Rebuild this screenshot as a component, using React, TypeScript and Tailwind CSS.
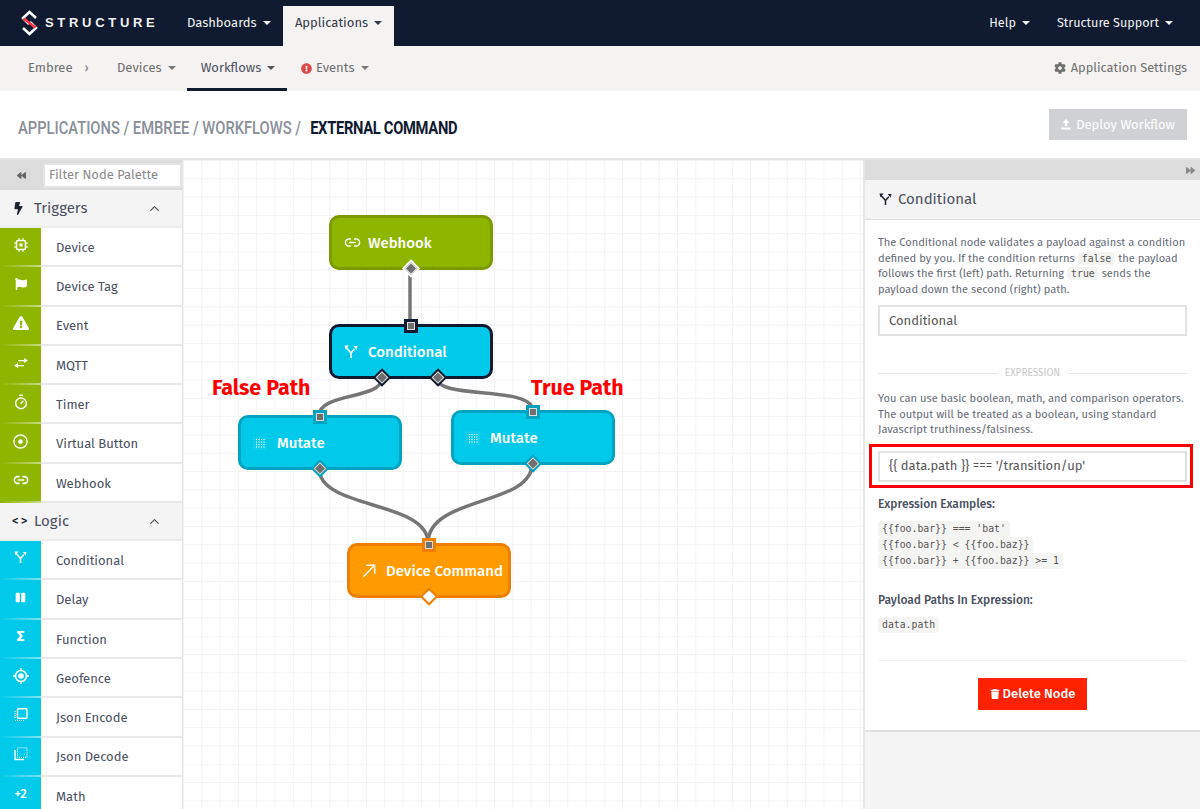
import { ReactNode } from "react";
import { ChevronUp, Link2, Timer } from "lucide-react";
import {
  FaBolt,
  FaFlag,
  FaExclamationTriangle,
  FaRegDotCircle,
  FaPause,
  FaCog,
  FaExclamationCircle,
  FaTrash,
  FaBackward,
  FaForward,
} from "react-icons/fa";

const ChipIcon = () => (
  <svg width="14" height="14" viewBox="0 0 14 14" fill="none" stroke="white">
    <rect x="2.5" y="2.5" width="9" height="9" rx="1.5" strokeWidth="1.6" />
    <rect x="5.5" y="5.5" width="3" height="3" fill="white" stroke="none" />
    <path d="M5 0v2M9 0v2M5 12v2M9 12v2M0 5h2M0 9h2M12 5h2M12 9h2" strokeWidth="1" />
  </svg>
);

const ExchangeIcon = () => (
  <svg width="14" height="12" viewBox="0 0 14 12" fill="white">
    <path d="M4 3h6V1l4 2.6L10 6V4.2H4z" />
    <path d="M10 8H4V6L0 8.6 4 11V9.2h6z" />
  </svg>
);

const ForkIcon = ({ color = "white", size = 14 }: { color?: string; size?: number }) => (
  <svg width={size} height={size} viewBox="0 0 14 14" fill="none" stroke={color} strokeWidth="1.6">
    <path d="M7 13V8L2.500 3M7 8l3.500-4" />
    <path d="M0.500 0.500h4.500l-3.500 4zM9.500 1h4l-1 4z" fill={color} stroke="none" />
  </svg>
);

const GeoIcon = () => (
  <svg width="16" height="16" viewBox="0 0 16 16" fill="none" stroke="white">
    <circle cx="8" cy="8" r="5.500" strokeWidth="1.600" />
    <circle cx="8" cy="8" r="2.800" fill="white" stroke="none" />
    <path d="M8 0v2.500M8 13.500V16M0 8h2.500M13.500 8H16" strokeWidth="1.400" />
  </svg>
);

const EncodeIcon = () => (
  <svg width="14" height="14" viewBox="0 0 14 14" fill="none" stroke="white">
    <rect x="3.500" y="0.800" width="9.500" height="9.500" rx="1" strokeWidth="1.400" />
    <path d="M1 3v8M1 12.500h9" strokeWidth="1" strokeDasharray="1 1" />
  </svg>
);

const DecodeIcon = () => (
  <svg width="14" height="14" viewBox="0 0 14 14" fill="none" stroke="white">
    <rect x="3.500" y="0.800" width="9.500" height="9.500" strokeWidth="1" strokeDasharray="1 1" />
    <path d="M1 3v9.500h9" strokeWidth="1.400" />
  </svg>
);

const DotsIcon = () => (
  <svg width="14" height="14" viewBox="0 0 14 14" fill="white">
    {[1, 3.500, 6, 8.500, 11, 13].map((y) =>
      [1, 3.500, 6, 8.500, 11, 13].map((x) => (
        <circle key={`${x}-${y}`} cx={x} cy={y} r={x > 2 && x < 12 && y > 2 && y < 12 ? 0.7 : 0.35} />
      ))
    )}
  </svg>
);

const ArrowIcon = () => (
  <svg width="14" height="14" viewBox="0 0 16 16" fill="none" stroke="white" strokeWidth="1.600">
    <path d="M1.500 14.500L14.500 1.500M5 1.500h9.500V11" />
  </svg>
);

const UploadIcon = () => (
  <svg width="10" height="11" viewBox="0 0 10 11" fill="white">
    <path d="M5 0l3.500 4H6.300v3H3.700V4H1.500z" />
    <rect x="0.500" y="8.500" width="9" height="2" />
  </svg>
);

const Logo = () => (
  <svg width="17" height="26" viewBox="0 0 17 26" fill="none" strokeWidth="2.600">
    <path d="M8 14L2 8l6.500-6L15 8" stroke="white" />
    <path d="M9 12l6 6-6.500 6L2 18" stroke="white" />
    <path d="M2.500 8.500l12 9" stroke="#ff3347" />
  </svg>
);

const Caret = ({ className }: { className: string }) => (
  <span className={`ml-1.5 inline-block h-0 w-0 border-x-[4px] border-t-[4px] border-x-transparent ${className}`} />
);

function PaletteRow({ icon, label, strip }: { icon: ReactNode; label: string; strip: string }) {
  return (
    <div className="flex h-[39.3px] bg-white">
      <div className={`flex w-[41px] shrink-0 flex-col ${strip}`}>
        <div className="flex flex-1 items-center justify-center pb-1 text-white">{icon}</div>
        <div className="h-0.5 bg-gradient-to-r from-transparent to-white/50" />
      </div>
      <div className="flex flex-1 items-center border-b-2 border-[#e9e9e9] pl-[15px] pt-0.5 text-[13px] text-[#4a5060]">
        {label}
      </div>
    </div>
  );
}

function GroupHeader({ icon, label }: { icon: ReactNode; label: string }) {
  return (
    <div className="flex h-[38px] items-center border-b-2 border-[#ececec] bg-[#f4f4f4] pl-3 pr-[20px] text-[15px] text-[#4a5060]">
      <span className="flex w-[22px] items-center text-[#1c2333]">{icon}</span>
      <span className="flex-1">{label}</span>
      <ChevronUp size={15} className="text-[#555]" />
    </div>
  );
}

function InPort({ className }: { className: string }) {
  return (
    <span className={`absolute -top-[8px] left-1/2 z-10 flex h-[14px] w-[14px] -translate-x-1/2 items-center justify-center ${className}`}>
      <span className="h-[8px] w-[8px] border border-[#ddd] bg-[#6f6f6f]" />
    </span>
  );
}

function OutPort({ className, inner = "border border-[#dddddd] bg-[#6f6f6f]", pos = "left-1/2" }: { className: string; inner?: string; pos?: string }) {
  return (
    <span className={`absolute -bottom-[8px] z-10 flex h-[13px] w-[13px] -translate-x-1/2 rotate-45 items-center justify-center ${pos} ${className}`}>
      <span className={`h-[9px] w-[9px] ${inner}`} />
    </span>
  );
}

function FlowNode({ className, icon, label, children }: { className: string; icon: ReactNode; label: string; children: ReactNode }) {
  return (
    <div className={`absolute flex h-[55px] w-[164px] items-center rounded-[10px] border-[3px] pl-[12px] text-[15px] font-medium text-white ${className}`}>
      <span className="flex w-[24px] shrink-0 items-center">{icon}</span>
      <span className="whitespace-nowrap pt-px">{label}</span>
      {children}
    </div>
  );
}

const Code = ({ children, className = "leading-none py-px" }: { children: ReactNode; className?: string }) => (
  <code className={`rounded-sm bg-[#f4f4f2] px-1 font-['DejaVu_Sans_Mono',monospace] text-[9.800px] text-[#555] ${className}`}>
    {children}
  </code>
);

export default function App() {
  return (
    <div className="h-[809px] w-[1200px] overflow-hidden bg-white font-['Fira_Sans','Noto_Sans',sans-serif]">
      <header className="flex h-[46px] bg-[#101a30] text-[13px] text-[#f2f2f2]">
        <div className="flex w-[187px] items-center pl-[21px]">
          <Logo />
          <span className="ml-[7px] font-['Liberation_Sans',sans-serif] text-[13px] font-bold tracking-[3.700px]">STRUCTURE</span>
        </div>
        <div className="flex w-[96px] items-center">
          Dashboards
          <Caret className="border-t-white" />
        </div>
        <div className="mt-1.5 flex w-[111px] items-center justify-center bg-[#f4f3f1] pb-1.5 text-[#333a48]">
          Applications
          <Caret className="border-t-[#333a48]" />
        </div>
        <div className="ml-auto flex items-center gap-[27px] pr-[27px] text-[12.600px]">
          <span className="flex items-center">Help<Caret className="border-t-white" /></span>
          <span className="flex items-center">Structure Support<Caret className="border-t-white" /></span>
        </div>
      </header>

      <nav className="flex h-[45px] bg-[#f4f3f1] text-[13px] text-[#6f6f6f]">
        <div className="flex w-[89px] items-center pb-px pl-[28px]">
          Embree<span className="ml-3 text-[12px]">›</span>
        </div>
        <div className="flex w-[98px] items-center pb-px pl-[28px]">
          Devices<Caret className="border-t-[#777]" />
        </div>
        <div className="flex w-[100px] items-center justify-center border-b-[3px] border-[#101a30] pl-0.5 pt-[2px] text-[#4d5260]">
          Workflows<Caret className="border-t-[#555]" />
        </div>
        <div className="flex items-center pb-px pl-[14px]">
          <FaExclamationCircle size={11} className="mr-[4px] text-[#dc4a48]" />
          Events<Caret className="border-t-[#777]" />
        </div>
        <div className="ml-auto flex items-center pb-px pr-[13px] text-[12.800px]">
          <FaCog size={12} className="mr-[5px]" />
          Application Settings
        </div>
      </nav>

      <div className="flex h-[69px] items-center justify-between border-b-2 border-[#e6e6e6] pl-[18px] pr-[13px]">
        <h1 className="mt-[7px] origin-left scale-x-[0.775] whitespace-nowrap font-['Roboto',sans-serif] text-[19px] font-medium text-[#8a8f98]">
          APPLICATIONS / EMBREE / WORKFLOWS / <span className="ml-[7px] font-bold tracking-[-0.4px] text-[#101a30]">EXTERNAL COMMAND</span>
        </h1>
        <button className="flex h-[31px] w-[138px] items-center justify-center gap-[5px] bg-[#cfd1d4] text-[13px] text-white">
          <UploadIcon />
          Deploy Workflow
        </button>
      </div>

      <main className="flex h-[649px]">
        <aside className="w-[183px] shrink-0 overflow-hidden border-r border-[#e4e4e4]">
          <div className="flex h-[30px] items-center bg-[#dcdcdc]">
            <div className="flex w-[43px] justify-center text-[#666]">
              <FaBackward size={9} />
            </div>
            <div className="flex h-[25px] w-[139px] items-center border-2 border-[#e4e4e4] bg-white pb-px pl-1 text-[13px] text-[#8a8a8a]">
              Filter Node Palette
            </div>
          </div>
          <GroupHeader icon={<FaBolt size={13} />} label="Triggers" />
          <PaletteRow strip="bg-[#8eb500]" icon={<ChipIcon />} label="Device" />
          <PaletteRow strip="bg-[#8eb500]" icon={<FaFlag size={12} />} label="Device Tag" />
          <PaletteRow strip="bg-[#8eb500]" icon={<FaExclamationTriangle size={16} />} label="Event" />
          <PaletteRow strip="bg-[#8eb500]" icon={<ExchangeIcon />} label="MQTT" />
          <PaletteRow strip="bg-[#8eb500]" icon={<Timer size={16} strokeWidth={2.200} />} label="Timer" />
          <PaletteRow strip="bg-[#8eb500]" icon={<FaRegDotCircle size={15} />} label="Virtual Button" />
          <PaletteRow strip="bg-[#8eb500]" icon={<Link2 size={16} strokeWidth={2.400} />} label="Webhook" />
          <GroupHeader icon={<span className="text-[13px] font-medium tracking-[2px]">{"<>"}</span>} label="Logic" />
          <PaletteRow strip="bg-[#00c9ea]" icon={<ForkIcon size={13} />} label="Conditional" />
          <PaletteRow strip="bg-[#00c9ea]" icon={<FaPause size={11} />} label="Delay" />
          <PaletteRow strip="bg-[#00c9ea]" icon={<span className="text-[15px] font-bold">Σ</span>} label="Function" />
          <PaletteRow strip="bg-[#00c9ea]" icon={<GeoIcon />} label="Geofence" />
          <PaletteRow strip="bg-[#00c9ea]" icon={<EncodeIcon />} label="Json Encode" />
          <PaletteRow strip="bg-[#00c9ea]" icon={<DecodeIcon />} label="Json Decode" />
          <PaletteRow strip="bg-[#00c9ea]" icon={<span className="text-[13px] font-medium">+2</span>} label="Math" />
        </aside>

        <section className="relative w-[680px] shrink-0 bg-[linear-gradient(#f3f3f3_1px,transparent_1px),linear-gradient(90deg,#f3f3f3_1px,transparent_1px)] bg-[size:18.300px_18.300px]">
          <svg className="absolute left-px top-0" width="680" height="649" fill="none" stroke="#767676" strokeWidth="3.500">
            <path d="M226 108V165" />
            <path d="M198 218C198 240 135 232 135 256" />
            <path d="M253 218C253 240 349 225 349 251" />
            <path d="M135 308C135 350 244 340 244 383" />
            <path d="M348 304C348 346 244 336 244 383" />
          </svg>

          <FlowNode className="left-[146px] top-[55px] border-[#7a9a00] bg-[#8eb500]" icon={<Link2 size={17} />} label="Webhook">
            <OutPort className="bg-white" />
          </FlowNode>
          <FlowNode className="left-[146px] top-[164px] border-[#101a30] bg-[#00c9ea]" icon={<ForkIcon size={14} />} label="Conditional">
            <InPort className="bg-[#101a30]" />
            <OutPort className="bg-[#101a30]" pos="left-[31.5%]" />
            <OutPort className="bg-[#101a30]" pos="left-[67%]" />
          </FlowNode>
          <FlowNode className="left-[55px] top-[255px] border-[#00a3bf] bg-[#00c9ea]" icon={<DotsIcon />} label="Mutate">
            <InPort className="bg-[#00a3bf]" />
            <OutPort className="bg-[#00a3bf]" />
          </FlowNode>
          <FlowNode className="left-[268px] top-[250px] border-[#00a3bf] bg-[#00c9ea]" icon={<DotsIcon />} label="Mutate">
            <InPort className="bg-[#00a3bf]" />
            <OutPort className="bg-[#00a3bf]" />
          </FlowNode>
          <FlowNode className="left-[164px] top-[383px] border-[#ee7f00] bg-[#ff9a00]" icon={<ArrowIcon />} label="Device Command">
            <InPort className="bg-[#ee7f00]" />
            <OutPort className="bg-[#ee7f00]" inner="bg-white" />
          </FlowNode>

          <span className="absolute left-[29px] top-[212px] text-[21.400px] font-bold text-[#ff0000]">False Path</span>
          <span className="absolute left-[348px] top-[212px] text-[21.400px] font-bold text-[#ff0000]">True Path</span>
        </section>

        <aside className="flex w-[337px] shrink-0 flex-col border-l-2 border-[#e6e6e6] bg-[#f4f4f4]">
          <div className="flex h-[20px] items-center justify-end bg-[#dcdcdc] pr-[5px] text-[#888]">
            <FaForward size={9} />
          </div>
          <div className="flex h-[40px] items-center gap-[6px] border-b border-[#dedede] pl-[14px] text-[15px] text-[#4a5060]">
            <ForkIcon color="#1c2333" size={13} />
            Conditional
          </div>
          <div className="flex h-[512px] flex-col border-b-2 border-[#e0e0e0] bg-white px-[13px] pt-[15px] text-[11.100px] leading-[15.500px] text-[#666b75]">
            <p className="whitespace-nowrap">
              The Conditional node validates a payload against a condition
              <br />
              defined by you. If the condition returns <Code>false</Code> the payload
              <br />
              follows the first (left) path. Returning <Code>true</Code> sends the
              <br />
              payload down the second (right) path.
            </p>
            <div className="mt-[8px] flex h-[31px] shrink-0 items-center border-2 border-[#e2e2e2] pl-[9px] text-[13px] text-[#555]">
              Conditional
            </div>
            <div className="mt-[30px] flex items-center gap-2 text-[10px] text-[#c8c8c8]">
              <span className="h-px flex-1 bg-[#e4e4e4]" />
              EXPRESSION
              <span className="h-px flex-1 bg-[#e4e4e4]" />
            </div>
            <p className="mt-[9.500px] whitespace-nowrap">
              You can use basic boolean, math, and comparison operators.
              <br />
              The output will be treated as a boolean, using standard
              <br />
              Javascript truthiness/falsiness.
            </p>
            <div className="-ml-[9px] -mr-[6px] mt-[6.500px] shrink-0 border-[3px] border-[#ff0000] py-[3.500px] pl-[6px] pr-[3px]">
              <div className="flex h-[31px] items-center border-2 border-[#e2e2e2] pl-[9px] text-[13px] text-[#555]">
                {"{{ data.path }} === '/transition/up'"}
              </div>
            </div>
            <p className="mt-[9px] text-[12px] font-medium text-[#4a5060]">Expression Examples:</p>
            <div className="mt-[8.500px] flex flex-col items-start">
              <Code className="h-[16px] leading-[16px]">{"{{foo.bar}} === 'bat'"}</Code>
              <Code className="h-[16px] leading-[16px]">{"{{foo.bar}} < {{foo.baz}}"}</Code>
              <Code className="h-[16px] leading-[16px]">{"{{foo.bar}} + {{foo.baz}} >= 1"}</Code>
            </div>
            <p className="mt-[24px] text-[12px] font-medium text-[#4a5060]">Payload Paths In Expression:</p>
            <div className="mt-[8.500px] flex items-start">
              <Code className="h-[16px] leading-[16px]">data.path</Code>
            </div>
            <div className="mt-[27px] h-px shrink-0 bg-[#f0f0f0]" />
            <button className="mx-auto mt-[16.500px] flex h-[32px] w-[109px] shrink-0 items-center justify-center gap-[3px] bg-[#ff2200] text-[13px] font-medium text-white">
              <FaTrash size={10} />
              Delete Node
            </button>
          </div>
        </aside>
      </main>
    </div>
  );
}
